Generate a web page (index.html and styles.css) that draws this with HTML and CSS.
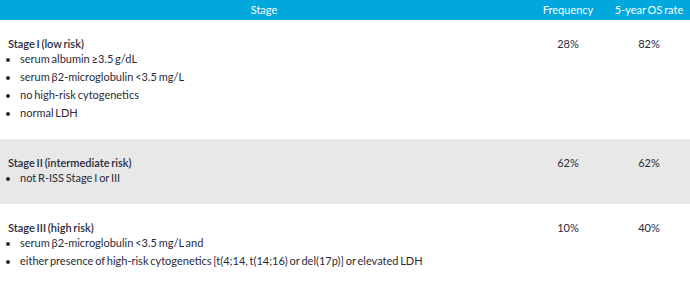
FILE: index.html
```html
<!DOCTYPE html>
<html>
<head>
<meta charset="utf-8">
<link rel="stylesheet" href="styles.css">
</head>
<body>
<div class="table">
  <div class="row head">
    <div class="c stage">Stage</div>
    <div class="c num">Frequency</div>
    <div class="c num">5-year OS rate</div>
  </div>
  <div class="row">
    <div class="c stage">
      <div class="title">Stage I (low risk)</div>
      <ul>
        <li>serum albumin ≥3.5 g/dL</li>
        <li>serum β2-microglobulin &lt;3.5 mg/L</li>
        <li>no high-risk cytogenetics</li>
        <li>normal LDH</li>
      </ul>
    </div>
    <div class="c num">28%</div>
    <div class="c num">82%</div>
  </div>
  <div class="row alt">
    <div class="c stage">
      <div class="title">Stage II (intermediate risk)</div>
      <ul>
        <li>not R-ISS Stage I or III</li>
      </ul>
    </div>
    <div class="c num">62%</div>
    <div class="c num">62%</div>
  </div>
  <div class="row">
    <div class="c stage">
      <div class="title">Stage III (high risk)</div>
      <ul>
        <li>serum β2-microglobulin &lt;3.5 mg/L and</li>
        <li>either presence of high-risk cytogenetics [t(4;14, t(14;16) or del(17p)] or elevated LDH</li>
      </ul>
    </div>
    <div class="c num">10%</div>
    <div class="c num">40%</div>
  </div>
</div>
</body>
</html>
```
FILE: styles.css
```css
html, body {
  margin: 0;
  padding: 0;
  background: #ffffff;
}
body {
  font-family: Lato, "Open Sans", sans-serif;
  font-size: 11px;
  color: #2b2b3a;
  word-spacing: -1px;
}
.table {
  width: 690px;
}
.row {
  display: grid;
  grid-template-columns: 528px 80px 82px;
  padding: 16px 0 19px;
}
.row.alt {
  background: #e8e8e8;
}
.row.head {
  background: #00a8de;
  color: #ffffff;
  padding: 0;
  height: 20px;
  align-items: center;
}
.head .c {
  text-align: center;
  line-height: 20px;
}
.c.stage {
  padding-left: 8px;
}
.head .c.stage {
  padding-left: 0;
}
.c.num {
  text-align: center;
  line-height: 16px;
}
.title {
  font-weight: 600;
  line-height: 16px;
}
ul {
  margin: 0;
  padding: 0 0 0 12px;
}
li {
  line-height: 14px;
  margin-top: 4px;
}
li:first-child {
  margin-top: 0;
}
```
